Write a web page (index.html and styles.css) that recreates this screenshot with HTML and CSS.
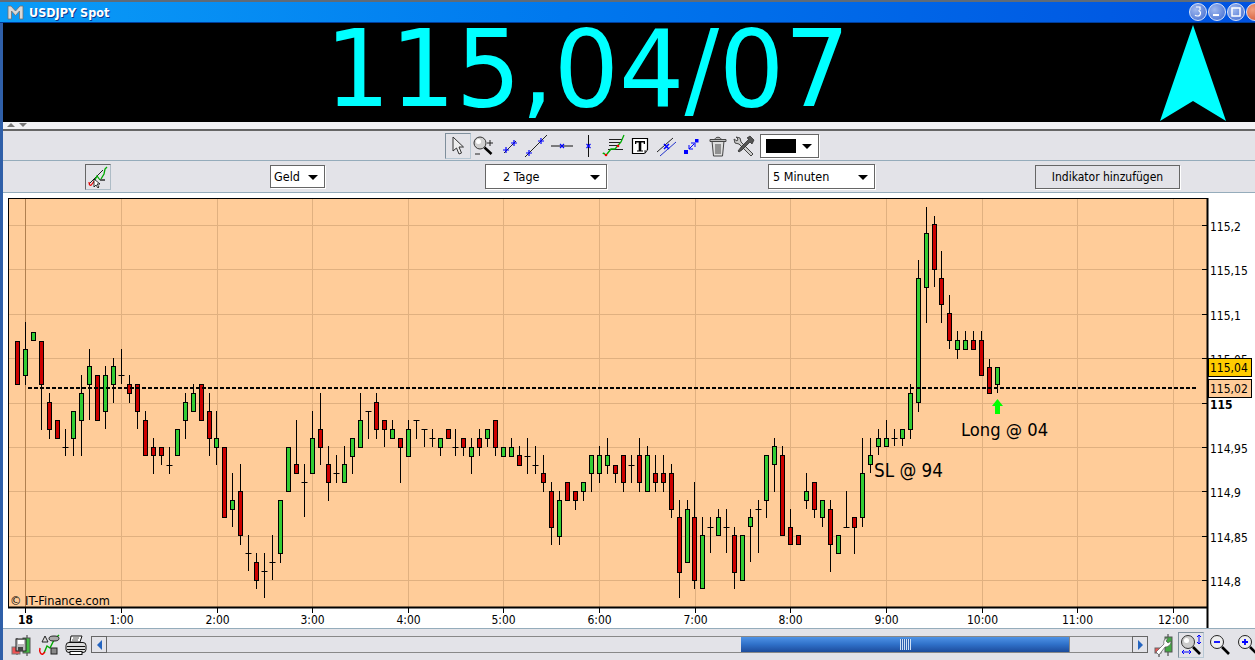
FILE: index.html
```html
<!DOCTYPE html>
<html lang="de">
<head>
<meta charset="utf-8">
<title>USDJPY Spot</title>
<link rel="stylesheet" href="styles.css">
</head>
<body>
<div class="window">
  <header class="titlebar">
    <svg class="app-logo" width="17" height="15" viewBox="0 0 17 15"><path d="M1 14V1h3l4.500 5L13 1h3v13h-3.500V6L8.500 10.500 4.500 6v8z" fill="#d8d8d8" stroke="#707070" stroke-width=".8"/></svg>
    <span class="title">USDJPY Spot</span>
    <div class="wincontrols">
      <span class="winbtn"><svg width="18" height="18" viewBox="0 0 18 18"><path d="M7 4h4v3M9.500 7.500c3 1 2.500 5.500-1 5.500-1 0-2-.3-2.500-1" fill="none" stroke="#fff" stroke-width="1.200"/></svg></span>
      <span class="winbtn"><svg width="18" height="18" viewBox="0 0 18 18"><rect x="5" y="11" width="6" height="2" fill="#fff"/></svg></span>
      <span class="winbtn"><svg width="18" height="18" viewBox="0 0 18 18"><rect x="5" y="5" width="8" height="8" fill="none" stroke="#fff" stroke-width="1.500"/></svg></span>
      <span class="winbtn close"></span>
    </div>
  </header>
  <div class="main">
    <section class="quote">
      <span class="price">115,04/07</span>
      <svg class="trend" width="68" height="98" viewBox="0 0 68 98"><path d="M34 1 67 97 34 77 1 97z" fill="#0ff"/></svg>
    </section>
    <div class="divider"><i class="tri up"></i><i class="tri down"></i></div>
    <div class="toolbar">
      <span class="tool selected"><svg width="20" height="22" viewBox="0 0 20 22"><path d="M5 2v14l3.500-3 2.500 6 2.500-1-2.500-6h4.500z" fill="#eee" stroke="#333"/></svg></span>
      <span class="tool"><svg width="24" height="24" viewBox="0 0 24 24"><circle cx="8" cy="9" r="6" fill="#d0d0d0" stroke="#333"/><circle cx="6.500" cy="7.500" r="2.500" fill="#fff"/><path d="M12.500 13.500l7 6.500" stroke="#000" stroke-width="2.500"/><path d="M15 9h6M18 6v6M3 20h5" stroke="#222"/></svg></span>
      <span class="tool"><svg width="24" height="24" viewBox="0 0 24 24"><path d="M6 19 18 7" stroke="#224"/><path d="M5 16h6M8 13v6M13 9h6M16 6v6" stroke="#00f" stroke-width="1.200"/></svg></span>
      <span class="tool"><svg width="24" height="24" viewBox="0 0 24 24"><path d="M1 23 23 1" stroke="#222"/><path d="M2 19h6M5 16v6M14 7h6M17 4v6" stroke="#00f" stroke-width="1.200"/></svg></span>
      <span class="tool"><svg width="24" height="24" viewBox="0 0 24 24"><path d="M1 12h22" stroke="#111"/><path d="M10 10l4 4M14 10l-4 4" stroke="#00f" stroke-width="1.100"/></svg></span>
      <span class="tool"><svg width="24" height="24" viewBox="0 0 24 24"><path d="M12.500 1v22" stroke="#111"/><path d="M10.500 10l4 4M14.500 10l-4 4" stroke="#00f" stroke-width="1.100"/></svg></span>
      <span class="tool"><svg width="24" height="24" viewBox="0 0 24 24"><path d="M7 5.500h13M7 8.500h11M7 11.500h8M6 15.500h15" stroke="#222"/><path d="M1 20c1-3 2 3 4 0l4-5h4l6-7 3-7" fill="none" stroke="#0a0" stroke-width="1.300"/><circle cx="4" cy="21" r="1.300" fill="#e00"/><circle cx="16" cy="12" r="1.300" fill="#e00"/></svg></span>
      <span class="tool"><svg width="24" height="24" viewBox="0 0 24 24"><path d="M4.500 4.500h15v11l-3 4h-12z" fill="#fff" stroke="#000" stroke-width="1.200"/><path d="M7 7h10v3h-1.300V8.500h-2.400v8H15v1H9v-1h1.700v-8H8.300V10H7z" fill="#000"/><path d="M16.500 19.500v-3h3" fill="none" stroke="#888"/></svg></span>
      <span class="tool"><svg width="24" height="24" viewBox="0 0 24 24"><path d="M3 18 19 4" stroke="#222"/><path d="M6 22 22 8" stroke="#23c"/><path d="M10 10l5 5M15 10l-5 5" stroke="#00f" stroke-width="1.500"/></svg></span>
      <span class="tool"><svg width="24" height="24" viewBox="0 0 24 24"><rect x="4" y="16" width="4" height="4" fill="#00f"/><rect x="15" y="5" width="3.500" height="3.500" fill="#00f"/><path d="M9 15 14 10" stroke="#00f"/><path d="M9 11v4h4M11 9h4v4" fill="none" stroke="#00f"/></svg></span>
      <span class="tool"><svg width="24" height="24" viewBox="0 0 24 24"><path d="M6 7h12l-1.500 15h-9z" fill="#ddd" stroke="#444"/><path d="M4 5.500h16v2H4zM9 5.500c0-3 6-3 6 0" fill="#bbb" stroke="#444"/><path d="M10 10v10M12 10v10M14 10v10" stroke="#444"/></svg></span>
      <span class="tool"><svg width="24" height="24" viewBox="0 0 24 24"><path d="M4 3l4 1 1 4 12 12-2 2L7 10 3 9 2 5l3 2 1-2z" fill="#ccc" stroke="#444"/><path d="M9 13 17 5l-2-1 3-2 4 4-2 4-2-2-8 8-3 2-1-1z" fill="#555" stroke="#222" stroke-width=".7"/></svg></span>
      <span class="combo color"><span class="swatch"></span><i class="caret"></i></span>
    </div>
    <div class="optionbar">
      <span class="iconbtn"><svg width="24" height="24" viewBox="0 0 24 24"><path d="M3 19 17 5" stroke="#222"/><path d="M3 17c0 4 2 4 3 2l3-4" fill="none" stroke="#e00" stroke-width="1.200"/><path d="M9 15l2-4 3 4" fill="none" stroke="#0a0" stroke-width="1.200"/><path d="M14 15h5" stroke="#000" stroke-width="1.200"/><path d="M15 14l3-5 1-5 2-2" fill="none" stroke="#0a0" stroke-width="1.300"/><path d="M8 14v8l2-2 2 3 1-1-2-3h3z" fill="#fff" stroke="#000" stroke-width=".8"/></svg></span>
      <span class="combo geld">Geld<i class="caret"></i></span>
      <span class="combo tage">2 Tage<i class="caret"></i></span>
      <span class="combo minuten">5 Minuten<i class="caret"></i></span>
      <button class="addbtn" type="button">Indikator hinzufügen</button>
    </div>
    <div class="chartpanel"><svg id="chart" width="1252" height="435" viewBox="3 193 1252 435"></svg></div>
    <footer class="bottombar">
      <span class="bicon"><svg width="24" height="24" viewBox="0 0 24 24"><path d="M8 5v3M8 19v3M18 2v3M18 20v3" stroke="#333"/><rect x="3" y="14" width="8" height="7" fill="#e55" stroke="#777"/><rect x="14" y="5" width="7" height="15" fill="#4b4" stroke="#555"/><rect x="7" y="6" width="10" height="12" fill="#bbb" stroke="#222"/><rect x="9" y="7" width="6" height="4" fill="#fff"/><rect x="9" y="14" width="5" height="4" fill="#444"/></svg></span>
      <span class="bicon"><svg width="24" height="24" viewBox="0 0 24 24"><path d="M7 20l3-7 3 2 4-8 5-5" fill="none" stroke="#0a0" stroke-width="1.400"/><path d="M3 15c-1 4 1 7 3 6l2-2" fill="none" stroke="#e00" stroke-width="1.400"/><path d="M5 9 8 3l3 6z" fill="#ddd" stroke="#222"/><ellipse cx="17" cy="5.500" rx="5" ry="2.500" fill="#aaa" stroke="#222"/><rect x="14" y="15" width="6" height="6" fill="#888" stroke="#222"/></svg></span>
      <span class="bicon"><svg width="24" height="24" viewBox="0 0 24 24"><path d="M7 3h11l-2 6H6z" fill="#fff" stroke="#111"/><path d="M9 5h6M8 7h6" stroke="#555"/><rect x="2" y="9.500" width="20" height="10" rx="3" fill="#ddd" stroke="#111"/><path d="M3 13.500h18M3 16.500h18" stroke="#111"/><rect x="6" y="18.500" width="12" height="3" fill="#fff" stroke="#111"/></svg></span>
      <div class="scrollbar">
        <span class="sbtn"><i class="ltri"></i></span>
        <div class="track"><div class="thumb"><span class="grip"></span></div></div>
        <span class="sbtn"><i class="rtri"></i></span>
      </div>
      <span class="bicon wrench"><svg width="24" height="24" viewBox="0 0 24 24"><path d="M8 18v6M17 1v4M17 19v4" stroke="#333"/><rect x="4" y="15" width="6" height="5" fill="#e55" stroke="#666"/><rect x="14" y="4" width="7" height="15" fill="#4a4" stroke="#555"/><path d="M5 19 13 11c-1-3 1-6 4-6l-2 3 2 2 3-2c0 4-3 6-6 6L8 22z" fill="#fff" stroke="#555" stroke-width=".7"/></svg></span>
      <span class="bicon selected"><svg width="24" height="24" viewBox="0 0 24 24"><circle cx="9" cy="9" r="6.500" fill="#ccc" stroke="#333"/><circle cx="7.500" cy="7.500" r="2.500" fill="#fff"/><path d="M14 14l7 7" stroke="#000" stroke-width="2.600"/><path d="M20 2v9M18 4l2-2 2 2M18 9l2 2 2-2M3 19h9M5 17l-2 2 2 2M10 17l2 2-2 2" fill="none" stroke="#00f"/></svg></span>
      <span class="bicon"><svg width="24" height="24" viewBox="0 0 24 24"><circle cx="9" cy="9" r="6.500" fill="#eee" stroke="#222"/><path d="M6 9h6" stroke="#00f" stroke-width="1.800"/><path d="M14 14l7 7" stroke="#000" stroke-width="2.600"/></svg></span>
      <span class="bicon"><svg width="24" height="24" viewBox="0 0 24 24"><circle cx="9" cy="9" r="6.500" fill="#eee" stroke="#222"/><path d="M6 9h6M9 6v6" stroke="#00f" stroke-width="1.800"/><path d="M14 14l7 7" stroke="#000" stroke-width="2.600"/></svg></span>
    </footer>
  </div>
</div>
<script src="chart.js"></script>
</body>
</html>
```
FILE: styles.css
```css
* { box-sizing: border-box; }
html, body { margin: 0; height: 660px; overflow: hidden; background: #e3e3e8; }
body { font-family: "DejaVu Sans", Verdana, sans-serif; font-stretch: condensed; color: #000; }
i { display: block; }
.window { width: 1255px; height: 660px; display: flex; flex-direction: column; border-top: 2px solid #5f6b78; overflow: hidden; }
.titlebar { height: 21px; flex: none; display: flex; align-items: center; padding-left: 7px; background: linear-gradient(90deg, #0a9cf7 0%, #0078ee 45%, #0052e0 100%); border-bottom: 1px solid #003c98; }
.app-logo { flex: none; }
.title { margin-left: 5px; color: #fff; font-weight: bold; font-size: 12.500px; text-shadow: 1px 1px 0 #0a3a90; }
.wincontrols { margin-left: auto; display: flex; gap: 1px; margin-right: -9px; align-items: center; }
.winbtn { width: 18px; height: 18px; border-radius: 50%; background: radial-gradient(circle at 35% 35%, #9fb8ee, #3c68d0); border: 1px solid #d8e4fa; display: block; overflow: hidden; }
.winbtn svg { display: block; margin: -1px; }
.winbtn.close { background: radial-gradient(circle at 35% 35%, #f0a080, #d05030); }
.main { flex: 1; min-height: 0; display: flex; flex-direction: column; border-left: 3px solid #2f5fa8; }
.quote { height: 99px; flex: none; background: #000; position: relative; display: flex; padding-left: 322px; overflow: hidden; }
.price { color: #0ff; font-stretch: normal; font-size: 107px; line-height: 99px; height: 99px; margin-top: -3px; transform: scaleX(.96); transform-origin: left; white-space: nowrap; }
.trend { position: absolute; right: 28px; top: 1px; }
.divider { height: 9px; flex: none; background: #f3f3f5; border-bottom: 2px solid #666; display: flex; gap: 4px; padding: 1px 0 0 4px; }
.tri { width: 0; height: 0; border-left: 4px solid transparent; border-right: 4px solid transparent; }
.tri.up { border-bottom: 4px solid #777; }
.tri.down { border-top: 4px solid #777; }
.toolbar { height: 29px; flex: none; display: flex; align-items: center; padding-left: 442px; background: #e3e3e8; }
.tool { width: 26px; height: 26px; flex: none; display: flex; align-items: center; justify-content: center; border: 1px solid transparent; }
.tool.selected { border-color: #7f8f9c #b8c8d4 #b8c8d4 #7f8f9c; }
.combo { background: #fff; border: 1px solid #666; box-shadow: 1px 1px 0 #fff; display: flex; align-items: center; font-size: 12.500px; position: relative; flex: none; }
.combo.color { width: 59px; height: 24px; margin-left: 3px; padding-left: 5px; }
.swatch { width: 30px; height: 14px; background: #000; }
.caret { position: absolute; right: 6px; top: 50%; margin-top: -2px; width: 0; height: 0; border-left: 5px solid transparent; border-right: 5px solid transparent; border-top: 5px solid #000; }
.optionbar { height: 33px; flex: none; display: flex; align-items: center; padding-left: 82px; border-top: 1px solid #95acbb; border-bottom: 1px solid #95acbb; background: #e3e3e8; }
.iconbtn { width: 26px; height: 26px; margin-right: 159px; display: flex; align-items: center; justify-content: center; border: 1px solid; border-color: #666 #aebcc6 #aebcc6 #666; }
.geld { width: 55px; height: 23px; padding-left: 3px; margin-right: 160px; }
.tage { width: 122px; height: 25px; padding-left: 17px; margin-right: 161px; }
.minuten { width: 107px; height: 25px; padding-left: 4px; margin-right: 160px; }
.addbtn { width: 145px; height: 24px; padding: 0; background: #e3e3e8; border: 1px solid #666; box-shadow: 1px 1px 0 #fff; font-family: inherit; font-stretch: condensed; font-size: 12px; color: #000; }
.chartpanel { height: 435px; flex: none; background: #fff; overflow: hidden; }
#chart { display: block; }
#chart text { font-family: "DejaVu Sans", Verdana, sans-serif; font-stretch: condensed; fill: #000; }
.bottombar { flex: 1; min-height: 0; display: flex; align-items: center; background: #e3e3e8; border-top: 1px solid #95acbb; padding-left: 5px; }
.bicon { width: 26px; height: 26px; flex: none; display: flex; align-items: center; justify-content: center; margin-right: 1.500px; border: 1px solid transparent; }
.bicon.selected { border-color: #7f8f9c #b8c8d4 #b8c8d4 #7f8f9c; margin: 0 3px 0 2px; }
.bicon.wrench { margin-left: 2px; margin-right: 0; }
.scrollbar { width: 1057px; height: 17px; flex: none; display: flex; margin-left: .5px; }
.sbtn { width: 16px; flex: none; border: 1px solid #666; background: #e3e3e8; display: flex; align-items: center; justify-content: center; }
.ltri { width: 0; height: 0; border-top: 5px solid transparent; border-bottom: 5px solid transparent; border-right: 5px solid #2565c0; }
.rtri { width: 0; height: 0; border-top: 5px solid transparent; border-bottom: 5px solid transparent; border-left: 5px solid #2565c0; }
.track { flex: 1; display: flex; padding-left: 634px; border-top: 1px solid #888; border-bottom: 1px solid #888; background: #e3e3e8; }
.thumb { width: 329px; background: linear-gradient(180deg, #4f93e6 0%, #2f70c8 50%, #1d4c9c 100%); display: flex; align-items: center; justify-content: center; border-right: 1px solid #888; }
.grip { width: 11px; height: 11px; background: repeating-linear-gradient(90deg, #cfe0f6 0 1px, #2a5fb0 1px 2px); }
```
FILE: chart.js
```js
// high, low, bodyTop, bodyBottom, type (r, g, d)
var C = [
[341,384,341,384,'r'],[322,385,349,375,'g'],[332,340,332,340,'g'],[341,430,341,384,'r'],[393,439,402,429,'r'],[420,438,420,438,'r'],
[429,456,447,447,'d'],[411,456,411,438,'g'],[375,456,393,420,'g'],[349,420,366,384,'g'],[375,420,375,420,'r'],[366,429,375,411,'g'],
[358,403,366,384,'g'],[349,384,375,375,'d'],[375,403,384,393,'r'],[384,429,384,411,'r'],[411,456,420,455,'r'],[438,474,447,455,'r'],
[447,465,447,455,'r'],[447,474,465,465,'d'],[429,455,429,455,'g'],[393,439,402,420,'g'],[384,411,393,411,'g'],[384,420,384,420,'r'],
[393,456,411,438,'r'],[411,465,438,447,'g'],[447,517,447,517,'r'],[473,527,500,509,'g'],[464,545,491,535,'r'],[535,571,553,553,'d'],
[553,589,562,580,'r'],[553,598,571,571,'d'],[535,580,562,562,'d'],[500,563,500,553,'g'],[447,491,447,491,'g'],[420,473,464,473,'r'],
[464,517,482,482,'d'],[411,473,438,473,'g'],[393,465,429,447,'r'],[446,501,464,482,'r'],[455,483,473,473,'d'],[446,482,464,482,'g'],
[438,474,438,456,'g'],[393,447,420,447,'g'],[411,439,411,411,'d'],[393,439,402,429,'r'],[420,447,420,429,'r'],[420,438,429,438,'g'],
[438,483,438,447,'r'],[420,456,429,456,'g'],[420,439,420,420,'d'],[429,447,429,429,'d'],[429,447,438,438,'d'],[438,456,438,447,'g'],
[429,438,429,438,'r'],[429,456,447,447,'d'],[438,456,438,447,'r'],[438,474,447,456,'g'],[429,456,438,447,'r'],[429,447,429,438,'g'],
[420,456,420,447,'r'],[447,456,447,456,'g'],[438,456,447,456,'g'],[446,465,455,465,'r'],[438,474,456,456,'d'],[446,474,465,465,'d'],
[455,492,473,482,'r'],[482,545,491,527,'r'],[491,545,500,536,'g'],[482,500,482,500,'r'],[491,510,491,500,'r'],[482,501,482,491,'g'],
[455,492,455,473,'g'],[446,483,455,473,'g'],[438,474,455,465,'g'],[465,483,465,473,'r'],[455,492,455,482,'r'],[455,483,465,465,'d'],
[438,492,455,482,'r'],[446,491,455,491,'g'],[455,492,473,482,'r'],[455,492,473,482,'r'],[464,518,473,509,'r'],[500,598,517,572,'r'],
[500,562,509,562,'g'],[482,589,517,580,'r'],[517,588,535,588,'g'],[517,553,527,527,'d'],[509,535,517,535,'g'],[509,553,527,527,'d'],
[527,589,535,572,'r'],[535,580,535,580,'g'],[509,562,517,526,'g'],[500,553,509,509,'d'],[455,518,455,500,'g'],[438,492,446,464,'g'],
[446,535,455,535,'r'],[509,544,527,544,'r'],[535,544,535,544,'r'],[473,509,491,500,'g'],[482,518,482,509,'r'],[500,527,500,517,'g'],
[500,572,509,544,'r'],[535,553,535,553,'g'],[491,527,527,527,'d'],[517,554,517,527,'r'],[438,527,473,517,'g'],[438,473,455,464,'g'],
[429,455,438,446,'g'],[420,446,438,446,'g'],[429,446,438,438,'d'],[429,446,429,438,'g'],[384,439,393,429,'g'],[260,412,278,402,'g'],
[207,323,233,287,'g'],[216,287,224,269,'r'],[251,323,278,304,'r'],[295,349,313,340,'r'],[331,359,340,349,'g'],[331,349,340,349,'g'],
[331,349,340,349,'r'],[331,375,340,375,'r'],[359,394,367,393,'r'],[367,393,367,384,'g']
];
var svg = document.getElementById('chart'), out = [];
function line(a, b, c, d, col, w, extra) {
  out.push('<line x1="' + a + '" y1="' + b + '" x2="' + c + '" y2="' + d + '" stroke="' + col + '" stroke-width="' + (w || 1) + '"' + (extra || '') + '/>');
}
function text(x, y, s, size, extra) {
  out.push('<text x="' + x + '" y="' + y + '" font-size="' + size + '"' + (extra || '') + '>' + s + '</text>');
}
out.push('<rect x="9" y="199" width="1198" height="408" fill="#fc9"/>');
var G = '#e0b080', H = [225, 269, 314, 358, 403, 447, 491, 536, 580];
var pl = ['115,2', '115,15', '115,1', '115,05', '115', '114,95', '114,9', '114,85', '114,8'];
H.forEach(function (y, i) {
  line(9, y + .5, 1207, y + .5, G);
  line(1202, y + .5, 1208, y + .5, '#000');
  if (i === 4) text(1210, y + 6, pl[i], 12, ' font-weight="bold"');
  else text(1210, y + 6, pl[i], 12);
});
var labels = ['18', '1:00', '2:00', '3:00', '4:00', '5:00', '6:00', '7:00', '8:00', '9:00', '10:00', '11:00', '12:00'];
labels.forEach(function (s, i) {
  var x = Math.round(25.3 + i * 95.62) + .5;
  line(x, 199, x, 607, i ? G : '#b08050');
  line(x, 607, x, 613, '#000');
  text(x, 624, s, 12, ' text-anchor="middle"' + (i ? '' : ' font-weight="bold"'));
});
C.forEach(function (c, i) {
  var x = Math.round(17.3 + i * 7.967) + .5;
  line(x, c[0], x, c[1], '#000');
  if (c[4] === 'd') { line(x - 3, c[2] + .5, x + 3, c[2] + .5, '#000'); return; }
  out.push('<rect x="' + (x - 2) + '" y="' + (c[2] + .5) + '" width="4" height="' + (c[3] - c[2]) + '" fill="' + (c[4] === 'r' ? '#c00' : '#3c3') + '" stroke="#000"/>');
});
line(28, 388, 1196, 388, '#000', 2, ' stroke-dasharray="4 2"');
out.push('<rect x="8.500" y="198.500" width="1199" height="409" fill="none" stroke="#000" stroke-width="1"/>');
line(8, 607.5, 1208, 607.5, '#000', 2);
line(1207.5, 198, 1207.5, 628, '#000', 2);
out.push('<rect x="1208.500" y="358.500" width="43" height="18" fill="#fc0" stroke="#000"/>');
text(1210, 372, '115,04', 12);
out.push('<rect x="1208.500" y="379.500" width="43" height="18" fill="#fc9" stroke="#000"/>');
text(1210, 393, '115,02', 12);
out.push('<path d="M997.500 399 1003 406H1000V414H995V406H992z" fill="#0f0"/>');
text(961, 436, 'Long @ 04', 18.200);
text(874, 477, 'SL @ 94', 18.700);
text(10, 605, '© IT-Finance.com', 12.700);
svg.innerHTML = out.join('');
```
